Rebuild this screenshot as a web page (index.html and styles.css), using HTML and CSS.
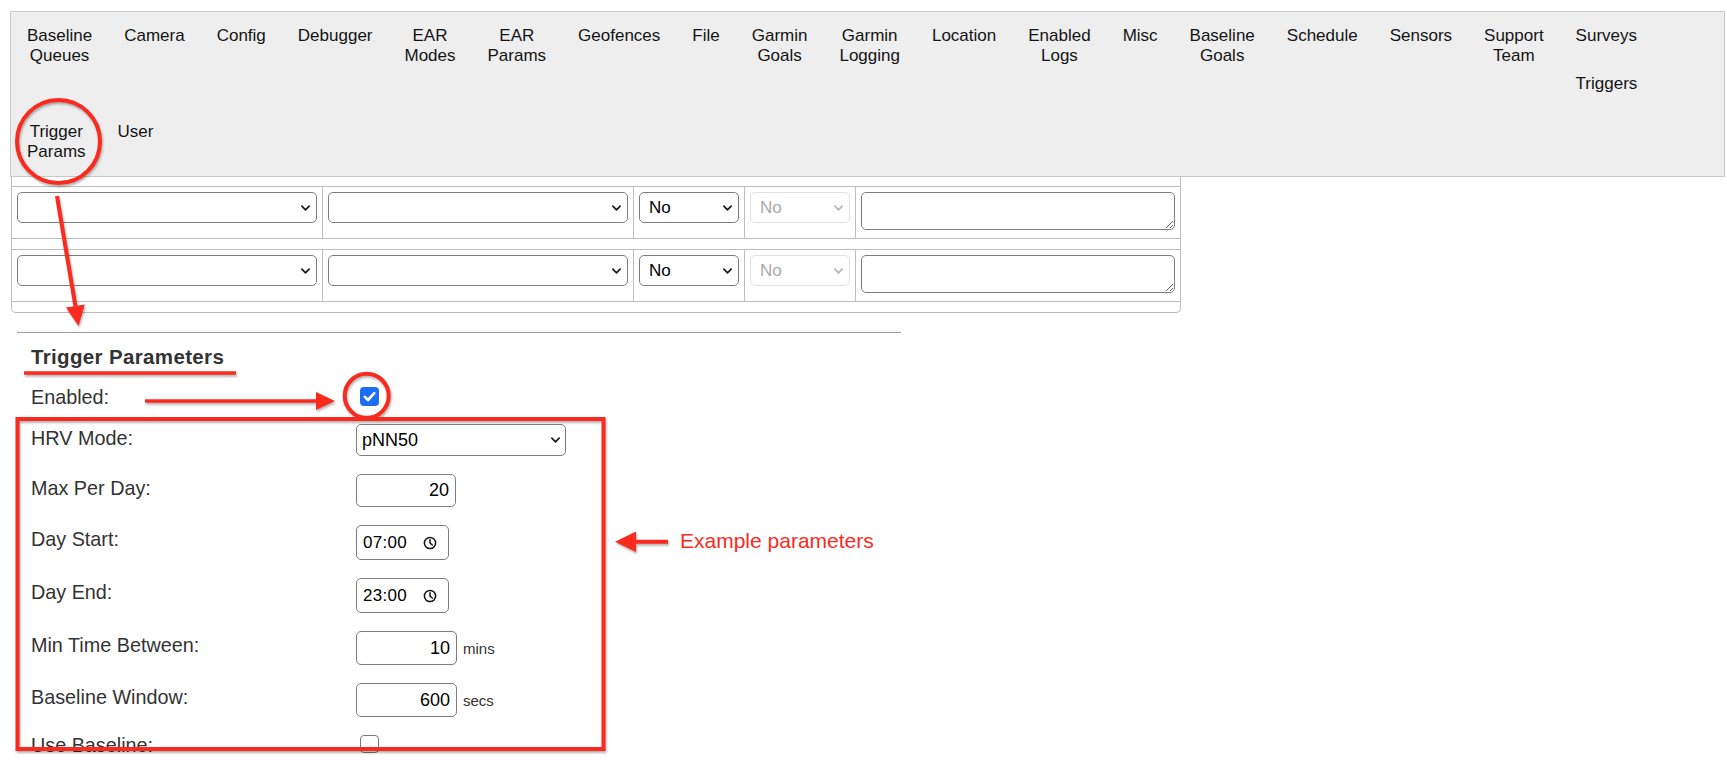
FILE: index.html
```html
<!DOCTYPE html>
<html lang="en">
<head>
<meta charset="utf-8">
<title>Trigger Params</title>
<link rel="stylesheet" href="styles.css">
</head>
<body>
<div class="page">
  <nav class="tabs">
    <span class="tab">Baseline Queues</span>
    <span class="tab">Camera</span>
    <span class="tab">Config</span>
    <span class="tab">Debugger</span>
    <span class="tab">EAR Modes</span>
    <span class="tab">EAR Params</span>
    <span class="tab">Geofences</span>
    <span class="tab">File</span>
    <span class="tab">Garmin Goals</span>
    <span class="tab">Garmin Logging</span>
    <span class="tab">Location</span>
    <span class="tab">Enabled Logs</span>
    <span class="tab">Misc</span>
    <span class="tab">Baseline Goals</span>
    <span class="tab">Schedule</span>
    <span class="tab">Sensors</span>
    <span class="tab">Support Team</span>
    <span class="tab">Surveys</span>
    <span class="tab">Triggers</span>
    <span class="tab">Trigger Params</span>
    <span class="tab">User</span>
  </nav>

  <div class="grid-wrap">
    <div class="grid-row">
      <div class="cell"><span class="sel"><select class="select select-wide"><option></option></select><svg class="chev" viewBox="0 0 10 6"><path d="M1 1l4 4 4-4"/></svg></span></div>
      <div class="cell"><span class="sel"><select class="select select-wide"><option></option></select><svg class="chev" viewBox="0 0 10 6"><path d="M1 1l4 4 4-4"/></svg></span></div>
      <div class="cell"><span class="sel"><select class="select select-small"><option>No</option></select><svg class="chev" viewBox="0 0 10 6"><path d="M1 1l4 4 4-4"/></svg></span></div>
      <div class="cell"><span class="sel"><select class="select select-small" disabled><option>No</option></select><svg class="chev chev-off" viewBox="0 0 10 6"><path d="M1 1l4 4 4-4"/></svg></span></div>
      <div class="cell"><textarea class="note"></textarea></div>
    </div>
    <div class="grid-row">
      <div class="cell"><span class="sel"><select class="select select-wide"><option></option></select><svg class="chev" viewBox="0 0 10 6"><path d="M1 1l4 4 4-4"/></svg></span></div>
      <div class="cell"><span class="sel"><select class="select select-wide"><option></option></select><svg class="chev" viewBox="0 0 10 6"><path d="M1 1l4 4 4-4"/></svg></span></div>
      <div class="cell"><span class="sel"><select class="select select-small"><option>No</option></select><svg class="chev" viewBox="0 0 10 6"><path d="M1 1l4 4 4-4"/></svg></span></div>
      <div class="cell"><span class="sel"><select class="select select-small" disabled><option>No</option></select><svg class="chev chev-off" viewBox="0 0 10 6"><path d="M1 1l4 4 4-4"/></svg></span></div>
      <div class="cell"><textarea class="note"></textarea></div>
    </div>
  </div>

  <section class="form">
    <div class="form-rule"></div>
    <h2 class="form-title">Trigger Parameters</h2>

    <div class="field field-check">
      <label class="field-label">Enabled:</label>
      <div class="field-control"><span class="cbox"><input type="checkbox" class="cb cb-on" checked><svg class="tick" viewBox="0 0 19 19"><path d="M4.8 9.8l3.2 3.2L14.3 6.2"/></svg></span></div>
    </div>
    <div class="field">
      <label class="field-label">HRV Mode:</label>
      <div class="field-control"><span class="sel"><select class="select select-hrv"><option>pNN50</option></select><svg class="chev chev-hrv" viewBox="0 0 10 6"><path d="M1 1l4 4 4-4"/></svg></span></div>
    </div>
    <div class="field">
      <label class="field-label">Max Per Day:</label>
      <div class="field-control"><input class="num num-max" type="text" value="20"></div>
    </div>
    <div class="field">
      <label class="field-label">Day Start:</label>
      <div class="field-control"><span class="time"><input class="time-input" type="text" value="07:00"><svg class="clock" viewBox="0 0 14 14"><circle cx="7" cy="7" r="5.6"/><path d="M7 3.8V7l2.3 2"/></svg></span></div>
    </div>
    <div class="field">
      <label class="field-label">Day End:</label>
      <div class="field-control"><span class="time"><input class="time-input" type="text" value="23:00"><svg class="clock" viewBox="0 0 14 14"><circle cx="7" cy="7" r="5.6"/><path d="M7 3.8V7l2.3 2"/></svg></span></div>
    </div>
    <div class="field">
      <label class="field-label">Min Time Between:</label>
      <div class="field-control"><input class="num" type="text" value="10"><span class="unit">mins</span></div>
    </div>
    <div class="field">
      <label class="field-label">Baseline Window:</label>
      <div class="field-control"><input class="num" type="text" value="600"><span class="unit">secs</span></div>
    </div>
    <div class="field field-check">
      <label class="field-label">Use Baseline:</label>
      <div class="field-control"><span class="cbox"><input type="checkbox" class="cb cb-off"></span></div>
    </div>
  </section>
</div>

<svg class="annot" viewBox="0 0 1727 761" width="1727" height="761">
  <g class="annot-shapes">
    <ellipse cx="58.5" cy="141.5" rx="41.5" ry="41.5"/>
    <line x1="57" y1="196" x2="75.4" y2="306"/>
    <polygon class="fill" points="78.5,326 84.8,304.5 66,307.5"/>
    <line x1="24" y1="373" x2="236" y2="373" class="thin"/>
    <line x1="145" y1="401" x2="318" y2="401" class="thin"/>
    <polygon class="fill" points="335,401 316,392 316,410"/>
    <circle cx="366.7" cy="395.8" r="22"/>
    <rect x="17.5" y="419" width="586" height="330"/>
    <line x1="634" y1="541.7" x2="668" y2="541.7"/>
    <polygon class="fill" points="615,541.7 636,531.5 636,552"/>
  </g>
</svg>
<span class="annot-label">Example parameters</span>
</body>
</html>
```

FILE: styles.css
```css
html, body {
  margin: 0;
  padding: 0;
  background: #fff;
}

body {
  position: relative;
  overflow: hidden;
  font-family: "Liberation Sans", Arial, sans-serif;
  color: #111;
}

.page {
  padding: 11px 2px 0 10px;
}

/* ---------- top tabs ---------- */
.tabs {
  display: flow-root;
  background: #eeeeee;
  border: 1px solid #c9c9c9;
}

.tab {
  float: left;
  width: min-content;
  padding: 14px 16px;
  text-align: center;
  font-size: 17px;
  line-height: 20px;
  color: #141414;
}

/* ---------- rows of selects ---------- */
.grid-wrap {
  margin-left: 1px;
  width: 1170px;
  box-sizing: border-box;
  border: 1px solid #bdbdbd;
  border-top: 0;
  border-radius: 0 0 5px 5px;
  padding: 9px 0 10px;
  display: flex;
  flex-direction: column;
  gap: 10px;
}

.grid-row {
  display: flex;
  border-top: 1px solid #bdbdbd;
  border-bottom: 1px solid #bdbdbd;
}

.cell {
  padding: 5px 5px 8px;
  border-left: 1px solid #bdbdbd;
}

.cell:first-child {
  border-left: 0;
}

.sel {
  position: relative;
  display: inline-block;
  vertical-align: top;
}

.select {
  appearance: none;
  -webkit-appearance: none;
  display: block;
  box-sizing: border-box;
  height: 31px;
  margin: 0;
  padding: 0 22px 0 9px;
  background: #fff;
  border: 1px solid #7d7d7d;
  border-radius: 5px;
  font-family: "Liberation Sans", Arial, sans-serif;
  font-size: 17px;
  color: #000;
}

.select-wide { width: 300px; }
.select-small { width: 100px; }

.select:disabled {
  border-color: #e2e2e2;
  color: #a8a8a8;
  opacity: 1;
}

.chev {
  position: absolute;
  right: 7px;
  top: 50%;
  width: 9px;
  height: 6px;
  margin-top: -3px;
  fill: none;
  stroke: #1c1c1c;
  stroke-width: 1.9;
  stroke-linecap: round;
  stroke-linejoin: round;
}

.chev-off { stroke: #b5b5b5; }

.note {
  display: block;
  box-sizing: border-box;
  width: 314px;
  height: 38px;
  margin: 0;
  border: 1px solid #7d7d7d;
  border-radius: 5px;
  background: #fff;
}

/* ---------- trigger parameters form ---------- */
.form {
  margin: 19px 0 0 7px;
  width: 884px;
}

.form-rule {
  border-top: 1px solid #9e9e9e;
}

.form-title {
  margin: 13px 0 19px;
  padding-left: 14px;
  font-size: 20.5px;
  line-height: 22px;
  font-weight: bold;
  letter-spacing: 0.35px;
  color: #333;
}

.field {
  display: flex;
  align-items: flex-start;
  margin-bottom: 18px;
}

.field-check {
  height: 19px;
}

.field-label {
  flex: 0 0 339px;
  box-sizing: border-box;
  padding: 3px 0 0 14px;
  font-size: 19.8px;
  line-height: 22px;
  color: #333;
}

.field-check .field-label {
  padding-top: 0;
  margin-top: -1px;
}

.field-control {
  display: flex;
  align-items: center;
}

.select-hrv {
  width: 210px;
  height: 32px;
  padding-left: 5px;
  font-size: 18px;
}

.chev-hrv { right: 6px; }

.num {
  box-sizing: border-box;
  width: 101px;
  height: 34px;
  margin: 0;
  padding: 0 6px;
  border: 1px solid #7d7d7d;
  border-radius: 5px;
  text-align: right;
  font-family: "Liberation Sans", Arial, sans-serif;
  font-size: 18px;
  color: #000;
  background: #fff;
}

.num-max { height: 33px; width: 100px; }

.unit {
  margin-left: 6px;
  font-size: 15px;
  color: #333;
}

.time {
  position: relative;
  display: inline-block;
}

.time-input {
  display: block;
  box-sizing: border-box;
  width: 93px;
  height: 35px;
  margin: 0;
  padding: 0 6px;
  border: 1px solid #7d7d7d;
  border-radius: 5px;
  font-family: "Liberation Sans", Arial, sans-serif;
  font-size: 17px;
  letter-spacing: 0.3px;
  color: #000;
  background: #fff;
}

.clock {
  position: absolute;
  right: 12px;
  top: 11px;
  width: 14px;
  height: 14px;
  fill: none;
  stroke: #111;
  stroke-width: 1.5;
  stroke-linecap: round;
  stroke-linejoin: round;
}

.cbox {
  position: relative;
  display: block;
  margin-left: 4px;
}

.cb {
  appearance: none;
  -webkit-appearance: none;
  display: block;
  box-sizing: border-box;
  width: 19px;
  height: 19px;
  margin: 0;
  border-radius: 4px;
}

.cb-on {
  background: #1b6ef3;
  border: 0;
}

.tick {
  position: absolute;
  left: 0;
  top: 0;
  width: 19px;
  height: 19px;
  fill: none;
  stroke: #fff;
  stroke-width: 2.6;
  stroke-linecap: round;
  stroke-linejoin: round;
  pointer-events: none;
}

.cb-off {
  height: 18px;
  background: #fff;
  border: 1px solid #767676;
}

/* ---------- red annotations ---------- */
.annot {
  position: absolute;
  left: 0;
  top: 0;
  pointer-events: none;
}

.annot-shapes {
  fill: none;
  stroke: #fb2a1e;
  stroke-width: 4;
  filter: drop-shadow(1px 2px 1.2px rgba(0, 0, 0, 0.3));
}

.annot-shapes .thin { stroke-width: 3.5; }

.annot-shapes .fill {
  fill: #fb2a1e;
  stroke: none;
}

.annot-label {
  position: absolute;
  left: 680px;
  top: 529px;
  font-family: "Liberation Sans", Arial, sans-serif;
  font-size: 21px;
  line-height: 24px;
  color: #fb2a1e;
}
```
